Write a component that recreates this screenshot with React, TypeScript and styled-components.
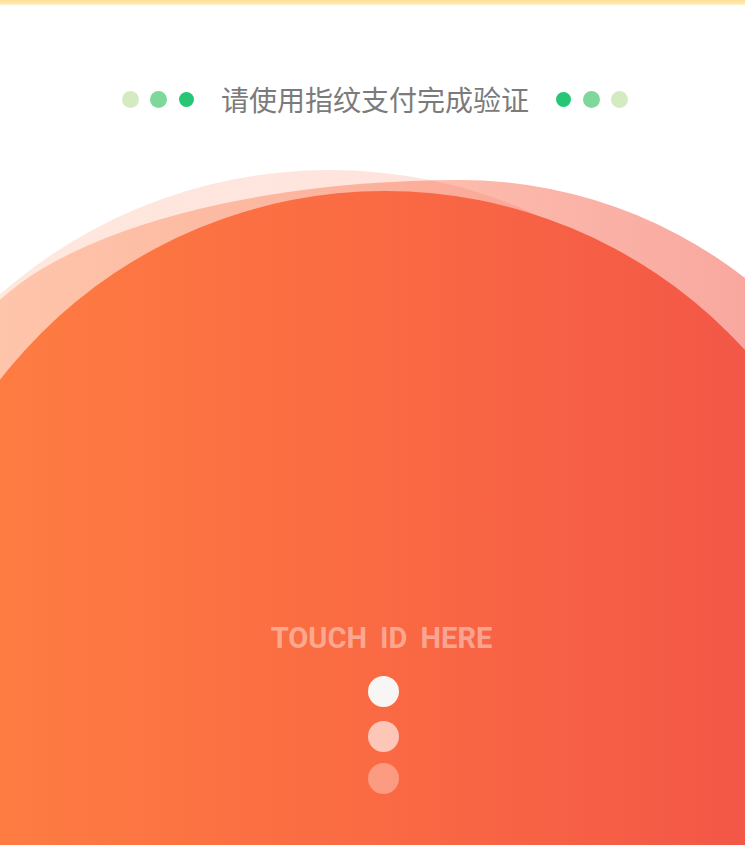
import React from "react";
import styled, { createGlobalStyle } from "styled-components";

const GlobalStyle = createGlobalStyle`
  html, body { margin: 0; padding: 0; background: #ffffff; }
  body { font-family: Roboto, "Noto Sans", "Noto Sans CJK SC", sans-serif; }
  * { box-sizing: border-box; }
`;

const Page = styled.div`
  position: relative;
  width: 100%;
  height: 845px;
  overflow: hidden;
  background: #ffffff;
  display: flex;
  flex-direction: column;
  align-items: center;
`;

const TopBar = styled.div`
  align-self: stretch;
  height: 5px;
  background: linear-gradient(to bottom, #fde29a 0%, #fee6a6 60%, #fff3d8 100%);
  position: relative;
  z-index: 2;
`;

const Waves = styled.svg`
  position: absolute;
  left: 0;
  top: 0;
  width: 745px;
  height: 845px;
  z-index: 0;
`;

const Header = styled.div`
  position: relative;
  z-index: 1;
  margin-top: 76px;
  height: 36px;
  display: flex;
  align-items: center;
  gap: 20px;
  padding-left: 5px;
`;

const DotGroup = styled.div`
  display: flex;
  align-items: center;
`;

const GreenDot = styled.span<{ $color: string; $size: number }>`
  width: 28px;
  height: 28px;
  display: flex;
  align-items: center;
  justify-content: center;
  &::before {
    content: "";
    display: block;
    width: ${(p) => p.$size}px;
    height: ${(p) => p.$size}px;
    border-radius: 50%;
    background: ${(p) => p.$color};
  }
`;

const Title = styled.h1`
  margin: 0;
  font-family: "Noto Sans CJK SC", "Noto Sans", sans-serif;
  font-weight: 400;
  font-size: 28px;
  line-height: 36px;
  color: #7b7b7b;
  white-space: nowrap;
`;

const Touch = styled.div`
  position: relative;
  z-index: 1;
  margin-top: 505px;
  padding-left: 18px;
  display: flex;
  flex-direction: column;
  align-items: center;
`;

const TouchLabel = styled.div`
  font-family: Roboto, "Liberation Sans", sans-serif;
  font-weight: 700;
  font-size: 29px;
  line-height: 32px;
  letter-spacing: 0px;
  word-spacing: 6px;
  color: rgba(255, 255, 255, 0.42);
  white-space: nowrap;
`;

const Pulse = styled.span<{ $alpha: number; $gap: number }>`
  display: block;
  width: 31px;
  height: 31px;
  border-radius: 50%;
  margin-top: ${(p) => p.$gap}px;
  margin-left: 4px;
  background: ${(p) => (p.$alpha >= 1 ? "#f8f6f4" : `rgba(255, 255, 255, ${p.$alpha})`)};
`;

const salmonPath =
  "M -40 377 A 500 197 0 0 1 460 180 A 463 463 0 0 1 923 643 L 923 900 L -40 900 Z";

const leftDots = [
  { c: "#d4ebc2", s: 17 },
  { c: "#7ed89b", s: 17 },
  { c: "#26c774", s: 15 },
];
const rightDots = [
  { c: "#26c774", s: 15 },
  { c: "#7ed89b", s: 17 },
  { c: "#d4ebc2", s: 17 },
];

export default function App() {
  return (
    <>
      <GlobalStyle />
      <Page>
        <Waves viewBox="0 0 745 845" aria-hidden="true">
          <defs>
            <linearGradient id="mainGrad" gradientUnits="userSpaceOnUse" x1="0" y1="0" x2="745" y2="0">
              <stop offset="0" stopColor="#fe7c42" />
              <stop offset="0.5" stopColor="#fa6a43" />
              <stop offset="1" stopColor="#f35747" />
            </linearGradient>
            <linearGradient id="salmonGrad" gradientUnits="userSpaceOnUse" x1="0" y1="0" x2="745" y2="0">
              <stop offset="0" stopColor="#fe7c42" stopOpacity="0.32" />
              <stop offset="0.5" stopColor="#fa6a43" stopOpacity="0.42" />
              <stop offset="1" stopColor="#f35747" stopOpacity="0.52" />
            </linearGradient>
          </defs>
          <path d={salmonPath} fill="url(#salmonGrad)" />
          <circle cx="330" cy="670" r="500" fill="url(#mainGrad)" opacity="0.18" />
          <circle cx="385" cy="678" r="487" fill="url(#mainGrad)" />
        </Waves>
        <TopBar />
        <Header>
          <DotGroup>
            {leftDots.map((d, i) => (
              <GreenDot key={i} $color={d.c} $size={d.s} />
            ))}
          </DotGroup>
          <Title>请使用指纹支付完成验证</Title>
          <DotGroup>
            {rightDots.map((d, i) => (
              <GreenDot key={i} $color={d.c} $size={d.s} />
            ))}
          </DotGroup>
        </Header>
        <Touch>
          <TouchLabel>TOUCH ID HERE</TouchLabel>
          <Pulse $alpha={1} $gap={22} />
          <Pulse $alpha={0.62} $gap={14} />
          <Pulse $alpha={0.33} $gap={11} />
        </Touch>
      </Page>
    </>
  );
}
